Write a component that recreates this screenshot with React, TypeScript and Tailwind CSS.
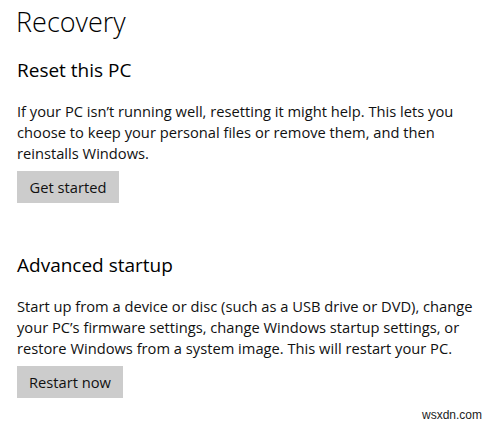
export default function App() {
  return (
    <div className="w-[494px] h-[422px] bg-white text-[#000] relative overflow-hidden" style={{ fontFamily: '"Open Sans", "Noto Sans", sans-serif' }}>
      <div className="pl-[16px] pt-[4px]">
        <h1 className="text-[27px] leading-[36px] font-light">Recovery</h1>

        <h2 className="mt-[17px] text-[19px] leading-[26px] font-normal pl-[1px]">Reset this PC</h2>
        <p className="mt-[18px] text-[14.7px] leading-[21px] pl-[1px] text-[#111]">
          If your PC isn’t running well, resetting it might help. This lets you<br />
          choose to keep your personal files or remove them, and then<br />
          reinstalls Windows.
        </p>
        <button className="mt-[7px] ml-[1px] w-[102px] h-[32px] bg-[#cccccc] text-[14.7px] text-[#111]">Get started</button>

        <h2 className="mt-[49px] text-[19px] leading-[26px] font-normal pl-[1px]">Advanced startup</h2>
        <p className="mt-[18px] text-[14.7px] leading-[21px] pl-[1px] text-[#111]">
          Start up from a device or disc (such as a USB drive or DVD), change<br />
          your PC’s firmware settings, change Windows startup settings, or<br />
          restore Windows from a system image. This will restart your PC.
        </p>
        <button className="mt-[7px] ml-[1px] w-[106px] h-[32px] bg-[#cccccc] text-[14.7px] text-[#111]">Restart now</button>
      </div>
      <div className="absolute right-[12px] bottom-[0px] text-[12px] leading-[14px] text-[#222]" style={{ fontFamily: '"Liberation Sans", Arial, sans-serif' }}>wsxdn.com</div>
    </div>
  );
}
